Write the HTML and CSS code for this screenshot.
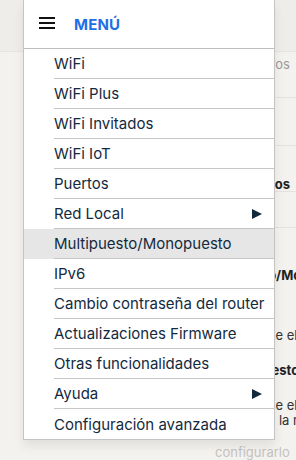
FILE: index.html
```html
<!DOCTYPE html>
<html lang="es">
<head>
<meta charset="utf-8">
<link rel="stylesheet" href="styles.css">
</head>
<body>
<div class="page">
  <div class="page-top"></div>
  <div class="page-body">
    <div class="left-col"><p class="left-text">Obtene</p></div>
    <div class="right-col">
      <p class="row r1 faint">Dispositivos</p>
      <p class="row r2"></p>
      <p class="row r3 bold">Puertos</p>
      <p class="row r4"></p>
      <p class="row r5 bold">Multipuesto/Monopuesto</p>
      <p class="row r6">Puede elegir</p>
      <p class="row r7 bold">Multipuesto</p>
      <p class="row r8a">Puede elegir</p>
      <p class="row r8b">en la red</p>
      <p class="row r9">configurarlo</p>
    </div>
  </div>
</div>

<nav class="menu">
  <div class="menu-head">
    <svg class="burger" width="16" height="12" viewBox="0 0 16 12"><rect x="0" y="0" width="16" height="2"/><rect x="0" y="5" width="16" height="2"/><rect x="0" y="10" width="16" height="2"/></svg>
    <span class="menu-title">MENÚ</span>
  </div>
  <ul class="menu-list">
    <li class="item"><span class="label">WiFi</span></li>
    <li class="item"><span class="label">WiFi Plus</span></li>
    <li class="item"><span class="label">WiFi Invitados</span></li>
    <li class="item"><span class="label">WiFi IoT</span></li>
    <li class="item"><span class="label">Puertos</span></li>
    <li class="item"><span class="label">Red Local<svg class="arrow" width="10" height="10" viewBox="0 0 10 10"><path d="M0 0 L10 5 L0 10 Z"/></svg></span></li>
    <li class="item active"><span class="label">Multipuesto/Monopuesto</span></li>
    <li class="item"><span class="label">IPv6</span></li>
    <li class="item"><span class="label">Cambio contraseña del router</span></li>
    <li class="item"><span class="label">Actualizaciones Firmware</span></li>
    <li class="item"><span class="label">Otras funcionalidades</span></li>
    <li class="item"><span class="label">Ayuda<svg class="arrow" width="10" height="10" viewBox="0 0 10 10"><path d="M0 0 L10 5 L0 10 Z"/></svg></span></li>
    <li class="item last"><span class="label">Configuración avanzada</span></li>
  </ul>
</nav>
</body>
</html>
```
FILE: styles.css
```css
* { box-sizing: border-box; }
html, body { margin: 0; padding: 0; }
body {
  width: 296px;
  height: 460px;
  overflow: hidden;
  background: #f4f2ee;
  font-family: Inter, "Liberation Sans", sans-serif;
  position: relative;
}
.page { width: 296px; height: 460px; }
.page-top { height: 52px; background: #efede9; border-bottom: 1px solid #e6e4e0; }
.page-body { display: flex; }
.left-col { width: 30px; padding-top: 16px; overflow: hidden; }
.left-text { margin: 0 0 0 -22px; font-size: 13px; color: #8a8a8a; white-space: nowrap; }
.right-col { margin-left: 120px; width: 176px; font-size: 13px; color: #333; }
.row { margin: 0; white-space: nowrap; overflow: hidden; border-bottom: 1px solid #e4e2de; }
.r1 { height: 46px; padding-top: 4px; text-align: right; padding-right: 6px; }
.r2 { height: 48px; }
.r3 { height: 46px; padding-top: 30px; text-align: right; padding-right: 6px; }
.r4 { height: 36px; }
.r5 { height: 93px; padding-top: 39px; padding-left: 80px; border-bottom: none; }
.r6 { height: 35px; padding-top: 6px; padding-left: 124px; border-bottom: none; }
.r7 { height: 42px; padding-top: 6px; padding-left: 103px; border-bottom: none; }
.r8a { height: 15px; line-height: 15px; padding-left: 124px; border-bottom: none; }
.r8b { height: 31px; line-height: 15px; padding-left: 140px; border-bottom: none; }
.r9 { padding-left: 95px; border-bottom: none; color: #c4c2be; }
.bold { font-weight: 700; color: #222; }
.faint { color: #9a9a9a; }

.menu {
  position: absolute;
  left: 23px;
  top: 0;
  width: 252px;
  background: #fff;
  border-left: 1px solid #c4c4c4;
  border-right: 1px solid #c4c4c4;
  border-bottom: 1px solid #c4c4c4;
  box-shadow: 0 6px 10px rgba(0,0,0,0.08);
}
.menu-head {
  height: 49px;
  border-bottom: 1px solid #bdbdbd;
  display: flex;
  align-items: center;
  padding-left: 15px;
}
.burger { fill: #111; margin-top: -2px; }
.menu-title {
  margin-left: 19px;
  color: #1f6fe5;
  font-weight: 700;
  font-size: 15px;
  letter-spacing: 0.2px;
}
.menu-list { list-style: none; margin: 0; padding: 0; }
.item { height: 30px; }
.item.active { background: #e6e6e6; }
.label {
  display: flex;
  align-items: center;
  justify-content: space-between;
  height: 30px;
  margin-left: 30px;
  padding-right: 12px;
  border-bottom: 1px solid #c6c6c6;
  color: #132a3e;
  font-size: 15px;
  white-space: nowrap;
}
.item.last .label { border-bottom: none; }
.arrow { fill: #132a3e; flex: none; }
```
